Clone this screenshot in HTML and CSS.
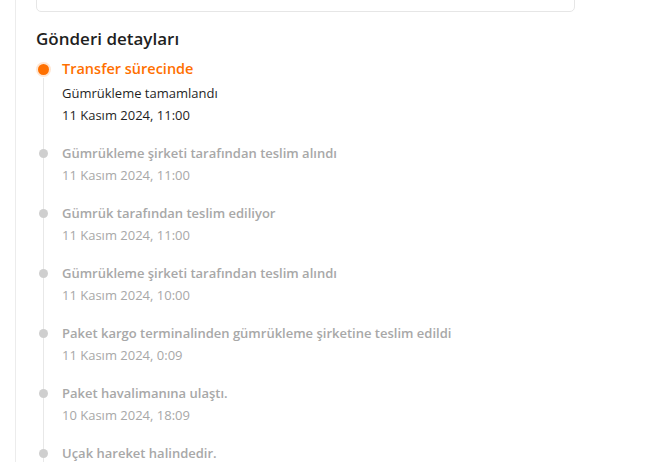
FILE: index.html
```html
<!DOCTYPE html>
<html>

<head>
  <title>Gönderi detayları</title>
  <meta charset="utf-8">
  <meta name="viewport" content="width=device-width, initial-scale=1.0">
  <link rel="stylesheet" href="styles.css">
</head>

<body>
  <div class="page">
    <div class="card"></div>

    <h2 class="section-title">Gönderi detayları</h2>

    <ul class="timeline">
      <li class="step active">
        <div class="rail"><span class="dot"></span><span class="line"></span></div>
        <div class="info">
          <div class="status">Transfer sürecinde</div>
          <div class="note">Gümrükleme tamamlandı</div>
          <div class="date">11 Kasım 2024, 11:00</div>
        </div>
      </li>
      <li class="step">
        <div class="rail"><span class="stub"></span><span class="dot"></span><span class="line"></span></div>
        <div class="info">
          <div class="status">Gümrükleme şirketi tarafından teslim alındı</div>
          <div class="date">11 Kasım 2024, 11:00</div>
        </div>
      </li>
      <li class="step">
        <div class="rail"><span class="stub"></span><span class="dot"></span><span class="line"></span></div>
        <div class="info">
          <div class="status">Gümrük tarafından teslim ediliyor</div>
          <div class="date">11 Kasım 2024, 11:00</div>
        </div>
      </li>
      <li class="step">
        <div class="rail"><span class="stub"></span><span class="dot"></span><span class="line"></span></div>
        <div class="info">
          <div class="status">Gümrükleme şirketi tarafından teslim alındı</div>
          <div class="date">11 Kasım 2024, 10:00</div>
        </div>
      </li>
      <li class="step">
        <div class="rail"><span class="stub"></span><span class="dot"></span><span class="line"></span></div>
        <div class="info">
          <div class="status">Paket kargo terminalinden gümrükleme şirketine teslim edildi</div>
          <div class="date">11 Kasım 2024, 0:09</div>
        </div>
      </li>
      <li class="step">
        <div class="rail"><span class="stub"></span><span class="dot"></span><span class="line"></span></div>
        <div class="info">
          <div class="status">Paket havalimanına ulaştı.</div>
          <div class="date">10 Kasım 2024, 18:09</div>
        </div>
      </li>
      <li class="step">
        <div class="rail"><span class="stub"></span><span class="dot"></span><span class="line"></span></div>
        <div class="info">
          <div class="status">Uçak hareket halindedir.</div>
        </div>
      </li>
    </ul>
  </div>
</body>

</html>
```

FILE: styles.css
```css
html,
body {
  height: 100%;
  overflow: hidden;
}

body {
  font-family: "Open Sans", "Noto Sans", Arial, sans-serif;
  font-size: 13px;
  color: #222;
  margin: 0;
  padding: 0;
  background: #fff;
}

.page {
  margin-left: 15px;
  padding-left: 20px;
  border-left: 1px solid #ececec;
  min-height: 100%;
}

/* tail of the card above, cut by the viewport */
.card {
  width: 537px;
  height: 20px;
  margin-top: -10px;
  border: 1px solid #e6e6e6;
  border-radius: 5px;
}

.section-title {
  font-size: 17px;
  font-weight: 600;
  line-height: 24px;
  color: #1f1f1f;
  margin: 15px 0 9px 0;
}

.timeline {
  list-style: none;
  margin: 0;
  padding: 0;
}

.step {
  display: flex;
  gap: 12px;
  margin-left: 1px;
}

.rail {
  width: 13px;
  display: flex;
  flex-direction: column;
  align-items: center;
  flex-shrink: 0;
}

.stub {
  width: 1px;
  height: 7px;
  background-color: #e8e8e8;
}

.line {
  width: 1px;
  flex: 1;
  background-color: #e8e8e8;
}

.dot {
  width: 9px;
  height: 9px;
  border-radius: 50%;
  background-color: #cfcfcf;
}

.active .dot {
  width: 11px;
  height: 11px;
  margin-top: 4px;
  margin-bottom: 3px;
  background-color: #ff7000;
  box-shadow: 0 0 0 2px #ffe6d2;
}

.info {
  padding-bottom: 16px;
  line-height: 22px;
}

.status {
  font-weight: 600;
  color: #a8a8a8;
}

.date {
  color: #a8a8a8;
}

.active .status {
  font-size: 14.5px;
  line-height: 18px;
  margin-bottom: 4px;
  color: #ff7000;
}

.active .note,
.active .date {
  color: #1f1f1f;
}
```
